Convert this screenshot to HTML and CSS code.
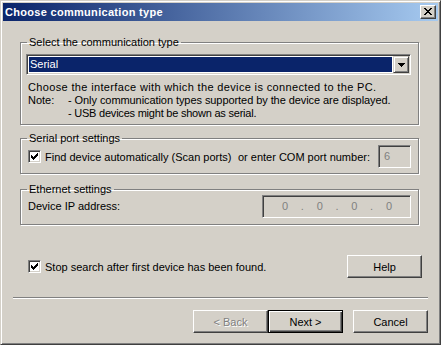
FILE: index.html
```html
<!DOCTYPE html>
<html>
<head>
<meta charset="utf-8">
<title>Choose communication type</title>
<link rel="stylesheet" href="styles.css">
</head>
<body>
<div class="window">
  <div class="titlebar">
    <span class="title">Choose communication type</span>
    <span class="close"><svg width="8" height="7" viewBox="0 0 8 7" shape-rendering="crispEdges"><path d="M0 0h2v1H0z M6 0h2v1H6z M1 1h2v1H1z M5 1h2v1H5z M2 2h4v1H2z M3 3h2v1H3z M2 4h4v1H2z M1 5h2v1H1z M5 5h2v1H5z M0 6h2v1H0z M6 6h2v1H6z" fill="#000"/></svg></span>
  </div>
  <div class="content">
    <fieldset class="group g1">
      <legend>Select the communication type</legend>
      <div class="combo">
        <div class="combo-value">Serial</div>
        <div class="combo-btn"><svg width="7" height="4" viewBox="0 0 7 4" shape-rendering="crispEdges"><path d="M0 0h7v1H0z M1 1h5v1H1z M2 2h3v1H2z M3 3h1v1H3z" fill="#000"/></svg></div>
      </div>
      <div class="desc">
        <p class="intro">Choose the interface with which the device is connected to the PC.</p>
        <div class="note">
          <span class="note-label">Note:</span>
          <div>
            <p class="note1">- Only communication types supported by the device are displayed.</p>
            <p class="note2">- USB devices might be shown as serial.</p>
          </div>
        </div>
      </div>
    </fieldset>

    <fieldset class="group g2">
      <legend>Serial port settings</legend>
      <div class="row">
        <span class="check"><svg width="7" height="7" viewBox="0 0 7 7" shape-rendering="crispEdges"><path d="M0 2h1v3H0z M1 3h1v3H1z M2 4h1v3H2z M3 3h1v3H3z M4 2h1v3H4z M5 1h1v3H5z M6 0h1v3H6z" fill="#000"/></svg></span>
        <span class="label">Find device automatically (Scan ports)</span>
        <span class="com-label">or enter COM port number:</span>
        <span class="field com">6</span>
      </div>
    </fieldset>

    <fieldset class="group g3">
      <legend>Ethernet settings</legend>
      <div class="row">
        <span class="ip-label">Device IP address:</span>
        <span class="field ip"><span>0</span><span>.</span><span>0</span><span>.</span><span>0</span><span>.</span><span>0</span></span>
      </div>
    </fieldset>

    <div class="stop-row">
      <span class="check"><svg width="7" height="7" viewBox="0 0 7 7" shape-rendering="crispEdges"><path d="M0 2h1v3H0z M1 3h1v3H1z M2 4h1v3H2z M3 3h1v3H3z M4 2h1v3H4z M5 1h1v3H5z M6 0h1v3H6z" fill="#000"/></svg></span>
      <span class="label">Stop search after first device has been found.</span>
      <button class="btn help">Help</button>
    </div>

    <div class="separator"></div>

    <div class="buttons">
      <button class="btn" disabled>&lt; Back</button>
      <button class="btn default">Next &gt;</button>
      <button class="btn cancel">Cancel</button>
    </div>
  </div>
</div>
</body>
</html>
```

FILE: styles.css
```css
* { box-sizing: border-box; }

html, body {
  margin: 0;
  padding: 0;
  background: #d4d0c8;
}

body {
  font-family: "Liberation Sans", Arial, sans-serif;
  font-size: 11px;
  color: #000;
}

p { margin: 0; }

.window {
  width: 441px;
  height: 345px;
  background: #d4d0c8;
  border: 1px solid;
  border-color: #d4d0c8 #404040 #404040 #d4d0c8;
  box-shadow: inset 1px 1px 0 #fff, inset -1px -1px 0 #808080;
  padding: 2px;
  display: flex;
  flex-direction: column;
}

.titlebar {
  height: 18px;
  background: linear-gradient(to right, #0a246a, #a6caf0);
  display: flex;
  align-items: center;
  justify-content: space-between;
  padding: 0 2px 0 2px;
}

.title {
  color: #fff;
  font-weight: bold;
  font-size: 11px;
  line-height: 13px;
  letter-spacing: 0.3px;
}

.close {
  width: 16px;
  height: 14px;
  background: #d4d0c8;
  border: 1px solid;
  border-color: #fff #404040 #404040 #fff;
  box-shadow: inset -1px -1px 0 #808080;
  display: flex;
  align-items: center;
  justify-content: center;
  padding: 0 1px 1px 0;
}
.close svg { display: block; }

.content {
  flex: 1;
  display: flex;
  flex-direction: column;
}

.group {
  margin: 0 0 0 17px;
  width: 399px;
  min-width: 0;
  border: 1px solid #808080;
  box-shadow: 1px 1px 0 #fff, inset 1px 1px 0 #fff;
  padding: 0 7px 4px 5px;
}

.group legend {
  padding: 0 2px;
  margin-left: 1px;
  line-height: 13px;
}

.g1 { margin-top: 15px; padding-bottom: 4px; }
.g2 { margin-top: 7px; padding-bottom: 5px; }
.g3 { margin-top: 9px; padding-bottom: 6px; }
.g3 .row { margin-top: -1px; }

.combo {
  margin-top: 5px;
  height: 21px;
  border: 1px solid;
  border-color: #808080 #fff #fff #808080;
  box-shadow: inset 1px 1px 0 #404040, inset -1px -1px 0 #d4d0c8;
  background: #fff;
  padding: 2px 1px 2px 2px;
  display: flex;
  gap: 1px;
}

.combo-value {
  flex: 1;
  background: #0a246a;
  color: #fff;
  line-height: 15px;
  padding-left: 1px;
}

.combo-btn {
  width: 16px;
  margin: -1px 0;
  background: #d4d0c8;
  border: 1px solid;
  border-color: #d4d0c8 #404040 #404040 #d4d0c8;
  box-shadow: inset 1px 1px 0 #fff, inset -1px -1px 0 #808080;
  display: flex;
  align-items: center;
  justify-content: center;
}
.combo-btn svg { display: block; }

.desc {
  margin-top: 6px;
  padding-left: 2px;
  line-height: 13px;
  white-space: nowrap;
}

.intro { letter-spacing: 0.35px; }
.note1 { letter-spacing: -0.07px; }
.note2 { letter-spacing: -0.22px; }

.note {
  display: grid;
  grid-template-columns: 40px auto;
}

.row {
  display: flex;
  align-items: center;
  padding-left: 2px;
}

.check {
  width: 13px;
  height: 13px;
  flex: none;
  background: #fff;
  border: 1px solid;
  border-color: #808080 #fff #fff #808080;
  box-shadow: inset 1px 1px 0 #404040, inset -1px -1px 0 #d4d0c8;
  display: flex;
  align-items: center;
  justify-content: center;
}
.check svg { display: block; }

.label { margin-left: 4px; }

.com-label { margin-left: auto; }

.field {
  height: 23px;
  background: #d4d0c8;
  color: #808080;
  border: 1px solid;
  border-color: #808080 #fff #fff #808080;
  box-shadow: inset 1px 1px 0 #404040, inset -1px -1px 0 #d4d0c8;
  line-height: 21px;
}

.com {
  width: 33px;
  margin-left: 8px;
  padding-left: 5px;
}

.ip-label { line-height: 13px; }

.ip {
  margin-left: auto;
  width: 149px;
  display: flex;
  justify-content: space-between;
  padding: 0 18px 0 19px;
}

.stop-row {
  margin-top: 30px;
  display: flex;
  align-items: center;
  padding: 0 16px 0 25px;
}

.btn {
  width: 75px;
  height: 23px;
  background: #d4d0c8;
  border: 1px solid;
  border-color: #fff #404040 #404040 #fff;
  box-shadow: inset -1px -1px 0 #808080;
  font-family: "Liberation Sans", Arial, sans-serif;
  font-size: 11px;
  color: #000;
  padding: 0;
  flex: none;
}

.btn:disabled {
  color: #808080;
  text-shadow: 1px 1px 0 #fff;
}

.btn.default {
  border-color: #000;
  box-shadow: inset 1px 1px 0 #fff, inset -1px -1px 0 #404040, inset -2px -2px 0 #808080;
}

.help { margin-left: auto; }

.separator {
  margin: 19px 10px 0 10px;
  height: 2px;
  border-top: 1px solid #808080;
  border-bottom: 1px solid #fff;
}

.buttons {
  margin-top: 11px;
  display: flex;
  justify-content: flex-end;
  padding-right: 10px;
}

.cancel { margin-left: 10px; }
```
